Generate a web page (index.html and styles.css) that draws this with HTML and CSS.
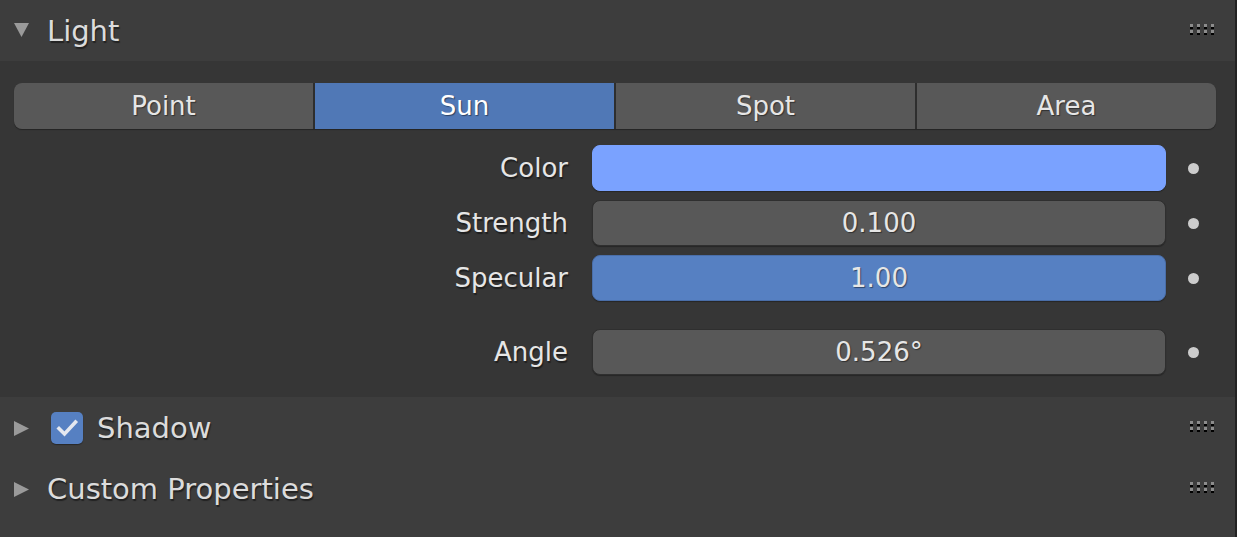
FILE: index.html
```html
<!DOCTYPE html>
<html>
<head>
<meta charset="utf-8">
<link rel="stylesheet" href="styles.css">
</head>
<body>
<div class="app">
  <div class="panel">
    <div class="header">
      <svg class="tri" width="18" height="18" viewBox="0 0 18 18"><polygon points="1,1 16,1 8.5,15" fill="#9a9a9a"/></svg>
      <span class="htitle">Light</span>
      <svg class="grip" width="25" height="12" viewBox="0 0 25 12">
        <g fill="#8c8c8c"><rect x="0" y="0" width="3" height="3"/><rect x="7" y="0" width="3" height="3"/><rect x="14" y="0" width="3" height="3"/><rect x="21" y="0" width="3" height="3"/><rect x="0" y="6" width="3" height="3"/><rect x="7" y="6" width="3" height="3"/><rect x="14" y="6" width="3" height="3"/><rect x="21" y="6" width="3" height="3"/></g>
        <g fill="#000"><rect x="0" y="3" width="3" height="2"/><rect x="7" y="3" width="3" height="2"/><rect x="14" y="3" width="3" height="2"/><rect x="21" y="3" width="3" height="2"/><rect x="0" y="9" width="3" height="2"/><rect x="7" y="9" width="3" height="2"/><rect x="14" y="9" width="3" height="2"/><rect x="21" y="9" width="3" height="2"/></g>
      </svg>
    </div>
    <div class="content">
      <div class="seg">
        <div class="segbtn">Point</div>
        <div class="segbtn active">Sun</div>
        <div class="segbtn">Spot</div>
        <div class="segbtn">Area</div>
      </div>
      <div class="props">
        <div class="row">
          <div class="label">Color</div>
          <div class="field color"></div>
          <div class="dotcol"><span class="dot"></span></div>
        </div>
        <div class="row">
          <div class="label">Strength</div>
          <div class="field">0.100</div>
          <div class="dotcol"><span class="dot"></span></div>
        </div>
        <div class="row">
          <div class="label">Specular</div>
          <div class="field slider">1.00</div>
          <div class="dotcol"><span class="dot"></span></div>
        </div>
        <div class="row spaced">
          <div class="label">Angle</div>
          <div class="field">0.526°</div>
          <div class="dotcol"><span class="dot"></span></div>
        </div>
      </div>
    </div>
    <div class="header sub">
      <svg class="tri" width="18" height="18" viewBox="0 0 18 18"><polygon points="1,1 16,8.5 1,16" fill="#9a9a9a"/></svg>
      <span class="check"><svg width="32" height="32" viewBox="0 0 32 32"><polyline points="8,16.5 13.5,22 24.5,10" fill="none" stroke="#e4e8f0" stroke-width="3.6" stroke-linecap="square"/></svg></span>
      <span class="htitle">Shadow</span>
      <svg class="grip" width="25" height="12" viewBox="0 0 25 12">
        <g fill="#8c8c8c"><rect x="0" y="0" width="3" height="3"/><rect x="7" y="0" width="3" height="3"/><rect x="14" y="0" width="3" height="3"/><rect x="21" y="0" width="3" height="3"/><rect x="0" y="6" width="3" height="3"/><rect x="7" y="6" width="3" height="3"/><rect x="14" y="6" width="3" height="3"/><rect x="21" y="6" width="3" height="3"/></g>
        <g fill="#000"><rect x="0" y="3" width="3" height="2"/><rect x="7" y="3" width="3" height="2"/><rect x="14" y="3" width="3" height="2"/><rect x="21" y="3" width="3" height="2"/><rect x="0" y="9" width="3" height="2"/><rect x="7" y="9" width="3" height="2"/><rect x="14" y="9" width="3" height="2"/><rect x="21" y="9" width="3" height="2"/></g>
      </svg>
    </div>
    <div class="header sub">
      <svg class="tri" width="18" height="18" viewBox="0 0 18 18"><polygon points="1,1 16,8.5 1,16" fill="#9a9a9a"/></svg>
      <span class="htitle">Custom Properties</span>
      <svg class="grip" width="25" height="12" viewBox="0 0 25 12">
        <g fill="#8c8c8c"><rect x="0" y="0" width="3" height="3"/><rect x="7" y="0" width="3" height="3"/><rect x="14" y="0" width="3" height="3"/><rect x="21" y="0" width="3" height="3"/><rect x="0" y="6" width="3" height="3"/><rect x="7" y="6" width="3" height="3"/><rect x="14" y="6" width="3" height="3"/><rect x="21" y="6" width="3" height="3"/></g>
        <g fill="#000"><rect x="0" y="3" width="3" height="2"/><rect x="7" y="3" width="3" height="2"/><rect x="14" y="3" width="3" height="2"/><rect x="21" y="3" width="3" height="2"/><rect x="0" y="9" width="3" height="2"/><rect x="7" y="9" width="3" height="2"/><rect x="14" y="9" width="3" height="2"/><rect x="21" y="9" width="3" height="2"/></g>
      </svg>
    </div>
  </div>
  <div class="strip"></div>
</div>
</body>
</html>
```
FILE: styles.css
```css
html, body {
  margin: 0;
  padding: 0;
  background: #3d3d3d;
  height: 100%;
  overflow: hidden;
}
body {
  font-family: "DejaVu Sans", "Liberation Sans", sans-serif;
  color: #e6e6e6;
}
.app {
  display: flex;
  width: 1237px;
  height: 537px;
}
.panel {
  flex: 1;
  display: flex;
  flex-direction: column;
  background: #3d3d3d;
}
.strip {
  width: 2px;
  background: #232323;
}
.header {
  height: 61px;
  display: flex;
  align-items: center;
  padding-left: 13px;
  padding-right: 20px;
  background: #3d3d3d;
  flex-shrink: 0;
}
.tri {
  display: block;
  margin-right: 16px;
  margin-top: 1px;
}
.htitle {
  font-size: 29px;
  color: #dcdcdc;
  text-shadow: 1px 2px 1px rgba(0,0,0,0.45);
  flex: 1;
  line-height: 1;
  margin-top: 2px;
}
.sub .htitle {
  margin-top: 1px;
}
.grip {
  display: block;
  margin-top: -1px;
}
.sub .tri {
  margin-top: 2px;
}
.check {
  width: 32px;
  height: 32px;
  border-radius: 5px;
  background: #5680c2;
  margin-right: 14px;
  margin-left: 4px;
  display: block;
  box-shadow: 0 1px 1px rgba(0,0,0,0.35);
}
.check svg {
  display: block;
}
.content {
  background: #363636;
  padding: 22px 19px 22px 14px;
}
.seg {
  display: flex;
  gap: 2px;
  height: 46px;
  border-radius: 8px;
  overflow: hidden;
  background: #2e2e2e;
  box-shadow: 0 1px 1px rgba(0,0,0,0.35);
}
.segbtn {
  flex: 1;
  background: #585858;
  display: flex;
  align-items: center;
  justify-content: center;
  font-size: 26px;
  color: #e6e6e6;
  text-shadow: 1px 1px 1px rgba(0,0,0,0.45);
}
.segbtn.active {
  background: #5078b6;
  color: #ffffff;
}
.props {
  display: flex;
  flex-direction: column;
  gap: 9px;
  margin-top: 16px;
}
.row {
  display: flex;
  align-items: center;
  height: 46px;
}
.row.spaced {
  margin-top: 19px;
}
.label {
  width: 578px;
  text-align: right;
  font-size: 26px;
  color: #e6e6e6;
  text-shadow: 1px 2px 1px rgba(0,0,0,0.45);
  padding-right: 24px;
  box-sizing: border-box;
  flex-shrink: 0;
}
.field {
  width: 574px;
  height: 46px;
  box-sizing: border-box;
  border-radius: 8px;
  background: #585858;
  border: 1px solid #2f2f2f;
  display: flex;
  align-items: center;
  justify-content: center;
  font-size: 26px;
  color: #e6e6e6;
  text-shadow: 1px 1px 1px rgba(0,0,0,0.45);
  box-shadow: 0 1px 1px rgba(0,0,0,0.3);
  flex-shrink: 0;
}
.field.color {
  background: #7aa2ff;
  border-color: #7aa2ff;
}
.field.slider {
  background: #5680c2;
  border-color: #4a6ea8;
}
.dotcol {
  flex: 1;
  display: flex;
  justify-content: center;
  padding-left: 4px;
}
.dot {
  width: 11px;
  height: 11px;
  border-radius: 50%;
  background: #cccccc;
  display: block;
}
```
